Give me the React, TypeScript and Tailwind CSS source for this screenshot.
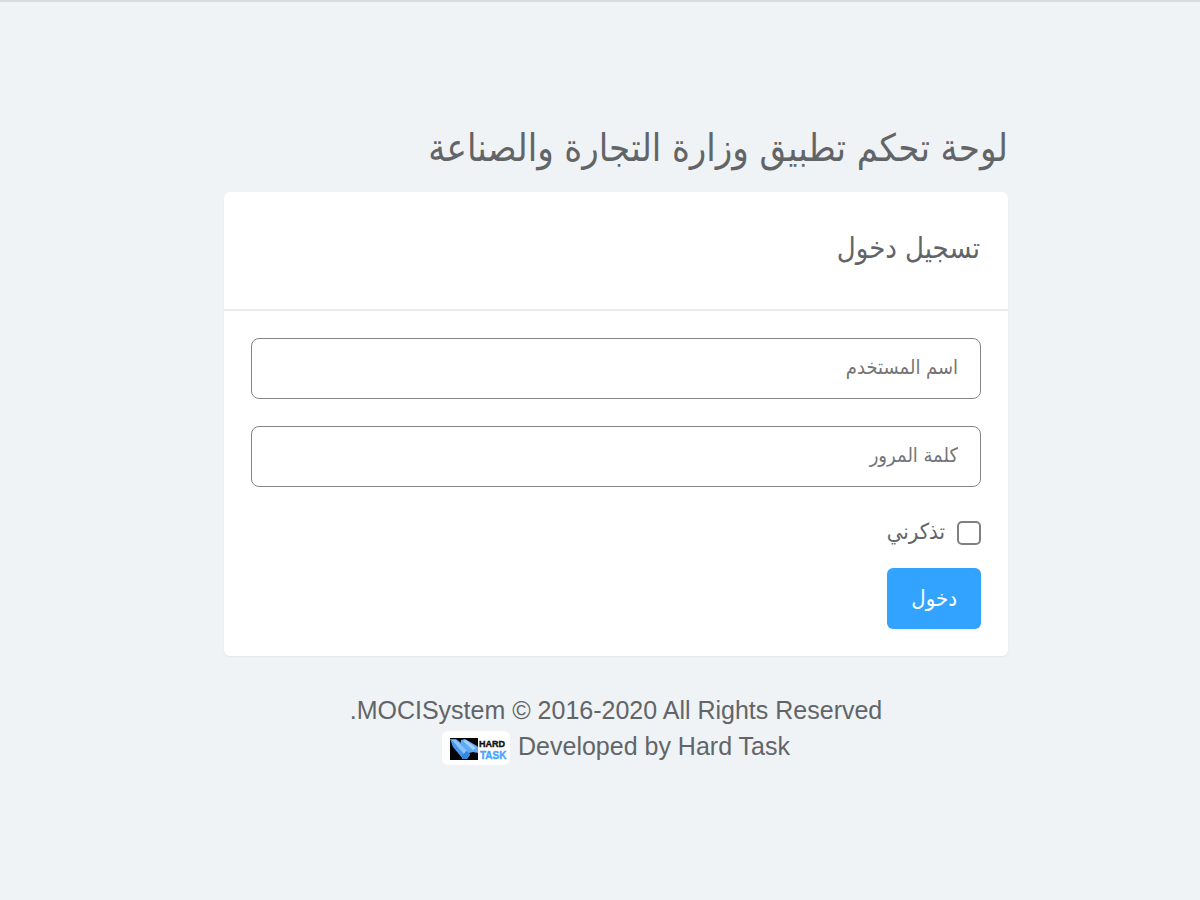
import type { InputHTMLAttributes } from "react";

function Field({ label, ...props }: { label: string } & InputHTMLAttributes<HTMLInputElement>) {
  return (
    <input
      {...props}
      aria-label={label}
      placeholder={label}
      className="block h-[61px] w-full rounded-lg border border-[#868686] bg-white px-[22px] pb-[2px] text-[20px] placeholder:text-[#757575] focus:outline-none focus:border-[#32a3ff]"
    />
  );
}

function HardTaskLogo() {
  return (
    <svg viewBox="0 0 68 34" className="mt-1 h-[34px] w-[68px]" role="img" aria-label="Hard Task">
      <rect width="68" height="34" rx="6" fill="#fff" />
      <rect x="8" y="7" width="28" height="22" fill="#050505" />
      <path d="M8 8h6l12 9 2 7-3 4h-4L11 16z" fill="#4b98ea" />
      <path d="M10 9h4l11 10-3 4z" fill="#8cc4fa" />
      <path d="M20 24l5-4 2 3-3 5h-4z" fill="#3586de" />
      <path d="M19 9l4-1 12 7 1 1v6l-5-1-4 1-8-8z" fill="#5eaaf5" />
      <path d="M21 10l3-1 10 8-3 2z" fill="#a3d1fb" />
      <g fontFamily="Liberation Sans, sans-serif" fontSize="9" fontWeight="bold" strokeWidth="0.4" direction="ltr">
        <text x="37" y="16" fill="#111" stroke="#111">HARD</text>
        <text x="38" y="28" fill="#4ba3ff" stroke="#4ba3ff" fontSize="10">TASK</text>
      </g>
    </svg>
  );
}

export default function App() {
  return (
    <main
      dir="rtl"
      className="min-h-screen border-t-2 border-[#d9dbdf] bg-[#eff3f6] pt-[118px] pb-12 pl-8 text-[#626568] font-['Liberation_Sans','DejaVu_Sans_Condensed','DejaVu_Sans',sans-serif]"
    >
      <div className="mx-auto w-full max-w-[784px]">
        <h1 className="mb-4 text-[38px] leading-[56px]">لوحة تحكم تطبيق وزارة التجارة والصناعة</h1>

        <section className="rounded-md bg-white shadow-xs">
          <h2 className="border-b-2 border-[#ebebec] px-7 pt-[34px] pb-[38px] text-[29px] leading-[45px]">تسجيل دخول</h2>
          <form className="flex flex-col items-start px-[27px] pt-[27px] pb-[27px]" onSubmit={(e) => e.preventDefault()}>
            <div className="flex w-full flex-col gap-[27px]">
              <Field label="اسم المستخدم" type="text" name="username" />
              <Field label="كلمة المرور" type="password" name="password" />
            </div>
            <label className="mt-[26px] mb-[19px] flex h-9 items-center gap-3 text-[22px]">
              <input
                type="checkbox"
                name="remember"
                className="mt-1 size-6 appearance-none rounded-[5px] border-2 border-[#808080] bg-white checked:bg-[#32a3ff]"
              />
              تذكرني
            </label>
            <button type="submit" className="h-[61px] rounded-md bg-[#32a3ff] px-6 text-[22px] text-white">
              دخول
            </button>
          </form>
        </section>

        <footer className="mt-9 text-center text-[25px] leading-9">
          <p>MOCISystem © 2016-2020 All Rights Reserved.</p>
          <p className="flex h-9 items-center justify-center gap-2">
            <span>Developed by Hard Task</span>
            <HardTaskLogo />
          </p>
        </footer>
      </div>
    </main>
  );
}
